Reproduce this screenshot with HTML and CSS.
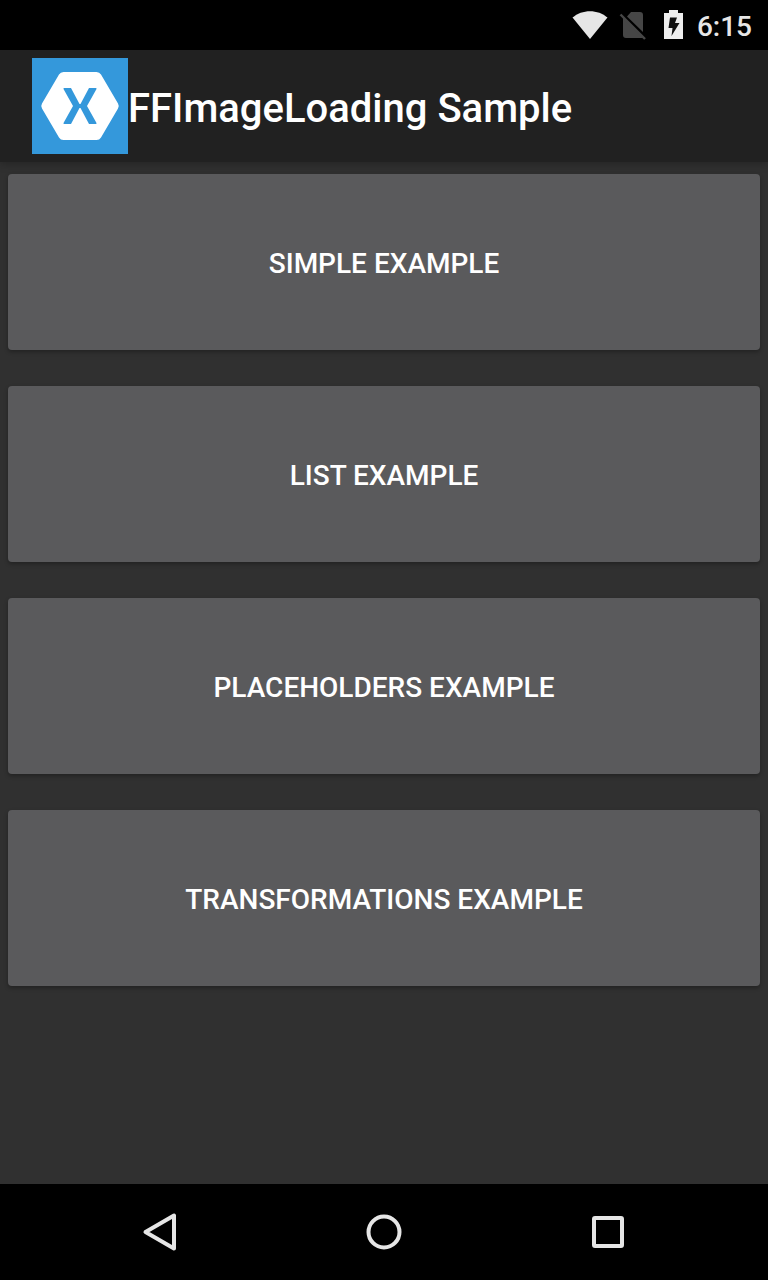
FILE: index.html
```html
<!DOCTYPE html>
<html lang="en">
<head>
<meta charset="utf-8">
<meta name="viewport" content="width=device-width, initial-scale=1">
<title>FFImageLoading Sample</title>
<link rel="stylesheet" href="styles.css">
</head>
<body>
<div class="status-bar">
  <svg class="status-icon wifi" width="36" height="30" viewBox="0 0 36 30" aria-hidden="true"><path d="M.5 7.500C10-1 26-1 35.500 7.500L18 29Z" fill="#e6e6e6"/></svg>
  <svg class="status-icon sim" width="28" height="30" viewBox="0 0 28 30" aria-hidden="true"><path d="M12 2H21Q24 2 24 5V22L8 6.500ZM4 7L24 27.500Q23.500 28 22 28H7Q4 28 4 25Z" fill="#464646"/><path d="M1.500 4.500L26 29" stroke="#464646" stroke-width="2.400"/></svg>
  <svg class="status-icon battery" width="20" height="30" viewBox="0 0 20 30" aria-hidden="true"><path d="M5 0H14V3H19V29H0V3H5Z" fill="#eee"/><path d="M6 7.500H13L11 13H15.500L7.500 26L8.500 18H4.500Z" fill="#111"/></svg>
  <time class="clock">6:15</time>
</div>
<header class="app-bar">
  <svg class="logo" viewBox="0 0 96 96" role="img" aria-label="Xamarin"><path d="M0 0H96V96H0Z" fill="#3498db"/><path d="M31.500 14H64.500Q67.500 14 69 16.500L86 45.500Q87.500 48 86 50.500L69 79.500Q67.500 82 64.500 82H31.500Q28.500 82 27 79.500L10 50.500Q8.500 48 10 45.500L27 16.500Q28.500 14 31.500 14Z" fill="#fff"/><path d="M32.500 30H39L47.500 46H48.500L57 30H63.500Q65 30 64.500 31L55 48L64.500 65Q65 66 63.500 66H57L48.500 50H47.500L39 66H32.500Q31 66 31.500 65L41 48L31.500 31Q31 30 32.500 30Z" fill="#3498db"/></svg>
  <h1 class="title">FFImageLoading Sample</h1>
</header>
<main class="content">
  <button class="example" type="button">SIMPLE EXAMPLE</button>
  <button class="example" type="button">LIST EXAMPLE</button>
  <button class="example" type="button">PLACEHOLDERS EXAMPLE</button>
  <button class="example" type="button">TRANSFORMATIONS EXAMPLE</button>
</main>
<nav class="nav-bar" aria-label="System">
  <button class="nav-button" type="button" aria-label="Back"><svg class="nav-icon" viewBox="0 0 40 40"><path d="M5.500 20L34 3.500V36.500Z"/></svg></button>
  <button class="nav-button" type="button" aria-label="Home"><svg class="nav-icon" viewBox="0 0 40 40"><circle cx="20" cy="20" r="15.500"/></svg></button>
  <button class="nav-button" type="button" aria-label="Recent apps"><svg class="nav-icon" viewBox="0 0 40 40"><rect x="6" y="6" width="28" height="28" rx="1"/></svg></button>
</nav>
</body>
</html>
```

FILE: styles.css
```css
* {
  box-sizing: border-box;
}

body {
  margin: 0;
  min-height: 100vh;
  display: flex;
  flex-direction: column;
  background: #303030;
  color: #fff;
  font-family: Roboto, sans-serif;
  font-weight: 500;
}

.status-bar {
  height: 50px;
  padding: 0 16px;
  display: flex;
  align-items: center;
  justify-content: flex-end;
  background: #000;
}

.wifi {
  margin-right: 11px;
}

.sim {
  margin-right: 17px;
}

.battery {
  margin-right: 13px;
}

.clock {
  color: #e6e6e6;
  font-size: 28px;
  line-height: 32px;
  padding-top: 4px;
}

.app-bar {
  padding: 8px 32px;
  display: flex;
  align-items: center;
  background: #212121;
  box-shadow: 0 2px 8px rgba(0, 0, 0, 0.25);
}

.logo {
  width: 96px;
  height: 96px;
  flex: none;
}

.title {
  margin: 0;
  padding-top: 6px;
  font-size: 40px;
  line-height: 48px;
  font-weight: 500;
}

.content {
  flex: 1;
  padding: 12px 8px;
  display: flex;
  flex-direction: column;
  gap: 36px;
}

.example {
  padding: 74px 16px 70px;
  border: 0;
  border-radius: 4px;
  background: #5a5a5c;
  box-shadow: 0 2px 4px rgba(0, 0, 0, 0.3);
  color: #fff;
  font: 500 28px/32px Roboto, sans-serif;
}

.nav-bar {
  height: 96px;
  padding: 0 48px;
  display: flex;
  background: #000;
}

.nav-button {
  flex: 1;
  padding: 0;
  border: 0;
  background: none;
  display: flex;
  align-items: center;
  justify-content: center;
}

.nav-icon {
  width: 40px;
  height: 40px;
  fill: none;
  stroke: #e6e6e6;
  stroke-width: 4;
  stroke-linejoin: round;
}
```
